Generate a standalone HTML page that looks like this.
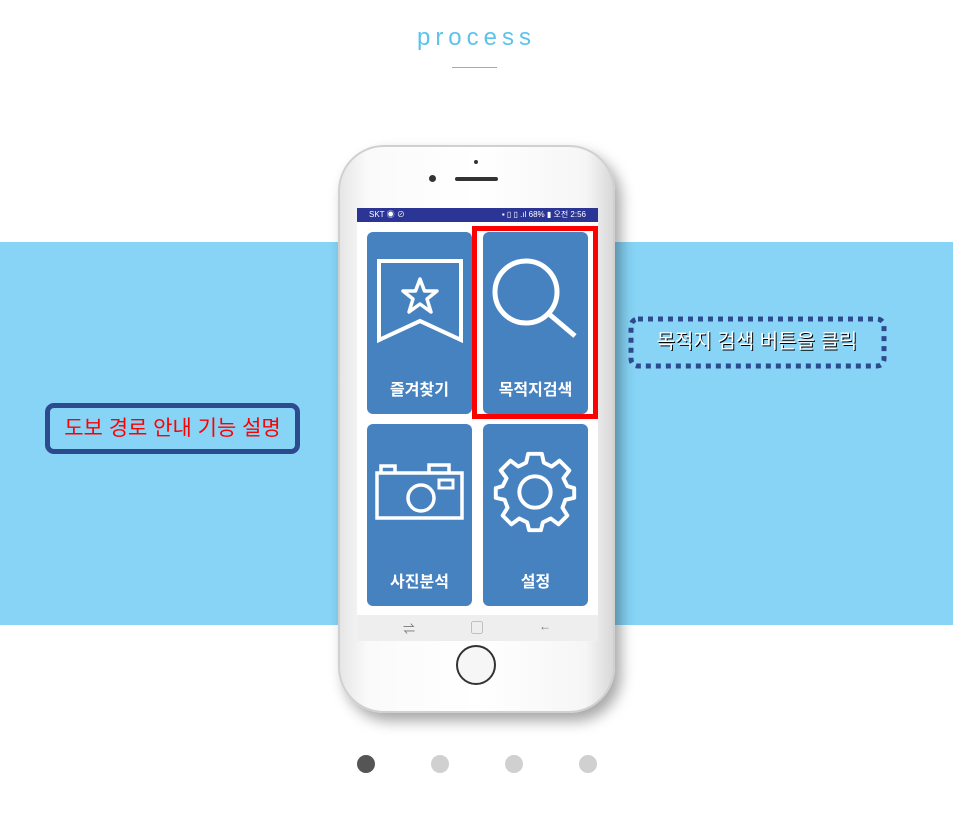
<!DOCTYPE html>
<html><head><meta charset="utf-8"><style>
*{margin:0;padding:0;box-sizing:border-box}
body{width:953px;height:830px;background:#fff;position:relative;overflow:hidden;font-family:"Liberation Sans","Noto Sans CJK KR",sans-serif}
.abs{position:absolute}
.title{left:0;width:953px;top:24px;text-align:center;font-size:24px;letter-spacing:5px;color:#5cc3ea}
.band{left:0;top:242px;width:953px;height:383px;background:#87d4f6}
.phone{left:338px;top:145px;width:277px;height:568px;border-radius:46px;background:linear-gradient(90deg,#e6e6e6,#fafafa 10%,#fff 50%,#f6f6f6 90%,#d8d8d8);border:2px solid #d0d0d0;box-shadow:6px 8px 14px rgba(0,0,0,.35)}
.screen{left:357px;top:208px;width:241px;height:433px;background:#fff}
.status{left:357px;top:208px;width:241px;height:14px;background:#2b3595;color:#fff;font-size:8px;line-height:14px;padding:0 12px}
.tile{width:105px;height:182px;background:#4682c0;border-radius:6px;color:#fff;font-size:16px;font-weight:bold;text-align:center}
.tile span{position:absolute;left:0;right:0;bottom:14px}
.tile svg{position:absolute;left:0;top:0}
.nav{left:357px;top:615px;width:241px;height:26px;background:#eeeeee;color:#777;font-size:12px}
</style></head><body>
<div class="abs title">process</div>
<div class="abs" style="left:452px;top:67px;width:45px;height:1px;background:#5cc3ea"></div>
<div class="abs band"></div>
<div class="abs phone"></div>
<div class="abs" style="left:429px;top:175px;width:7px;height:7px;border-radius:50%;background:#333"></div>
<div class="abs" style="left:455px;top:177px;width:43px;height:4px;border-radius:2px;background:#333"></div>
<div class="abs" style="left:474px;top:160px;width:4px;height:4px;border-radius:50%;background:#333"></div>
<div class="abs screen"></div>
<div class="abs status"><span>SKT ◉ ⊘</span><span style="float:right">▪ ▯ ▯ .ıl 68% ▮ 오전 2:56</span></div>
<div class="abs tile" style="left:367px;top:232px">
<svg width="105" height="182"><path d="M12 29H94V108L53 89L12 108Z" fill="none" stroke="#fff" stroke-width="4"/><path d="M53 47L57.5 59H70L60 67L64 80L53 72L42 80L46 67L36 59H48.5Z" fill="none" stroke="#fff" stroke-width="3.5" stroke-linejoin="round"/></svg>
<span>즐겨찾기</span></div>
<div class="abs tile" style="left:483px;top:232px">
<svg width="105" height="182"><circle cx="43" cy="60" r="31" fill="none" stroke="#fff" stroke-width="5"/><path d="M66 82L92 104" stroke="#fff" stroke-width="5"/></svg>
<span>목적지검색</span></div>
<div class="abs tile" style="left:367px;top:424px">
<svg width="105" height="182"><rect x="10" y="49" width="85" height="45" fill="none" stroke="#fff" stroke-width="3.5"/><path d="M14 49V42H28V49M62 49V41H82V49" fill="none" stroke="#fff" stroke-width="3.5"/><rect x="72" y="56" width="14" height="8" fill="none" stroke="#fff" stroke-width="3"/><circle cx="54" cy="74" r="13" fill="none" stroke="#fff" stroke-width="3.5"/></svg>
<span>사진분석</span></div>
<div class="abs tile" style="left:483px;top:424px">
<svg width="105" height="182"><g transform="translate(52,68) scale(0.98)" fill="none" stroke="#fff" stroke-width="4" stroke-linejoin="round"><path d="M-7,-34 L7,-34 L9,-25 L17,-21 L25,-27 L35,-17 L29,-9 L33,-1 L40,1 L40,11 L31,13 L28,21 L33,29 L24,38 L16,32 L8,36 L6,44 L-6,44 L-8,36 L-16,32 L-24,38 L-33,29 L-28,21 L-31,13 L-40,11 L-40,1 L-33,-1 L-29,-9 L-35,-17 L-25,-27 L-17,-21 L-9,-25 Z" transform="translate(0,-5)"/><circle cx="0" cy="0" r="16"/></g></svg>
<span>설정</span></div>
<div class="abs" style="left:472px;top:226px;width:126px;height:193px;border:5px solid #f00"></div>
<div class="abs nav"><span class="abs" style="left:46px;top:5px">⇌</span><span class="abs" style="left:114px;top:4px">▢</span><span class="abs" style="left:182px;top:4px">←</span></div>
<div class="abs" style="left:456px;top:645px;width:40px;height:40px;border-radius:50%;border:2px solid #333;background:#f6f6f6"></div>
<div class="abs" style="left:45px;top:403px;width:255px;height:51px;border:5px solid #2d4a8e;border-radius:9px;color:#f00;font-size:21px;line-height:41px;text-align:center">도보 경로 안내 기능 설명</div>
<svg class="abs" style="left:628px;top:316px" width="259" height="53"><rect x="3" y="3" width="253" height="47" rx="7" fill="none" stroke="#2d4a8e" stroke-width="5" stroke-dasharray="5 5"/></svg>
<div class="abs" style="left:629px;top:317px;width:256px;height:51px;color:#fff;font-size:20px;line-height:51px;text-align:center;text-shadow:1px 1px 0 #000">목적지 검색 버튼을 클릭</div>
<div class="abs" style="left:357px;top:755px;width:18px;height:18px;border-radius:50%;background:#555"></div>
<div class="abs" style="left:431px;top:755px;width:18px;height:18px;border-radius:50%;background:#d0d0d0"></div>
<div class="abs" style="left:505px;top:755px;width:18px;height:18px;border-radius:50%;background:#d0d0d0"></div>
<div class="abs" style="left:579px;top:755px;width:18px;height:18px;border-radius:50%;background:#d0d0d0"></div>
</body></html>
